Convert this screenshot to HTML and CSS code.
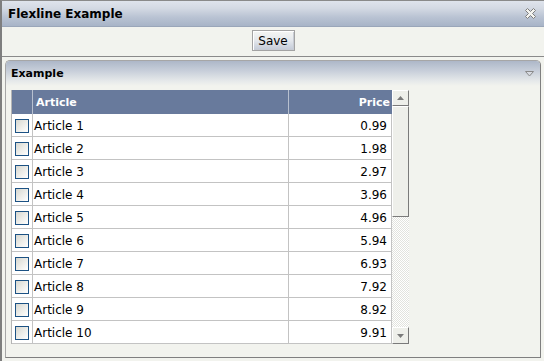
FILE: index.html
```html
<!DOCTYPE html>
<html>
<head>
<meta charset="utf-8">
<link rel="stylesheet" href="styles.css">
</head>
<body>
<div class="window">
  <div class="titlebar">
    <span class="title">Flexline Example</span>
    <svg class="close" width="11" height="11" viewBox="0 0 11 11"><path d="M0.5 2.5 L2.5 0.5 L5.5 3.5 L8.5 0.5 L10.5 2.5 L7.5 5.5 L10.5 8.5 L8.5 10.5 L5.5 7.5 L2.5 10.5 L0.5 8.5 L3.5 5.5 Z" fill="#f4f4f0" stroke="#7d7d7d" stroke-width="1"/></svg>
  </div>
  <div class="toolbar">
    <button class="btn">Save</button>
  </div>
  <div class="content">
    <div class="panel">
      <div class="panel-header">
        <span class="panel-title">Example</span>
        <svg class="collapse" width="9" height="6" viewBox="0 0 9 6"><path d="M0.5 0.5 L8.5 0.5 L4.5 5 Z" fill="#d8dbe2" stroke="#8a8a8a" stroke-width="1"/></svg>
      </div>
      <div class="panel-body">
        <div class="table">
          <div class="grid">
            <div class="row head">
              <div class="cell c-check"></div>
              <div class="cell c-art">Article</div>
              <div class="cell c-price">Price</div>
            </div>
            <div class="row"><div class="cell c-check"><span class="cb"></span></div><div class="cell c-art">Article 1</div><div class="cell c-price">0.99</div></div>
            <div class="row"><div class="cell c-check"><span class="cb"></span></div><div class="cell c-art">Article 2</div><div class="cell c-price">1.98</div></div>
            <div class="row"><div class="cell c-check"><span class="cb"></span></div><div class="cell c-art">Article 3</div><div class="cell c-price">2.97</div></div>
            <div class="row"><div class="cell c-check"><span class="cb"></span></div><div class="cell c-art">Article 4</div><div class="cell c-price">3.96</div></div>
            <div class="row"><div class="cell c-check"><span class="cb"></span></div><div class="cell c-art">Article 5</div><div class="cell c-price">4.96</div></div>
            <div class="row"><div class="cell c-check"><span class="cb"></span></div><div class="cell c-art">Article 6</div><div class="cell c-price">5.94</div></div>
            <div class="row"><div class="cell c-check"><span class="cb"></span></div><div class="cell c-art">Article 7</div><div class="cell c-price">6.93</div></div>
            <div class="row"><div class="cell c-check"><span class="cb"></span></div><div class="cell c-art">Article 8</div><div class="cell c-price">7.92</div></div>
            <div class="row"><div class="cell c-check"><span class="cb"></span></div><div class="cell c-art">Article 9</div><div class="cell c-price">8.92</div></div>
            <div class="row"><div class="cell c-check"><span class="cb"></span></div><div class="cell c-art">Article 10</div><div class="cell c-price">9.91</div></div>
          </div>
          <div class="scrollbar">
            <div class="sb-btn"><svg width="7" height="4" viewBox="0 0 7 4"><path d="M3.5 0 L7 4 L0 4 Z" fill="#7a7a7a"/></svg></div>
            <div class="sb-thumb"></div>
            <div class="sb-track"></div>
            <div class="sb-btn sb-down"><svg width="7" height="4" viewBox="0 0 7 4"><path d="M0 0 L7 0 L3.5 4 Z" fill="#7a7a7a"/></svg></div>
          </div>
        </div>
      </div>
    </div>
  </div>
</div>
</body>
</html>
```

FILE: styles.css
```css
* { box-sizing: border-box; }
html, body { margin: 0; padding: 0; }
body {
  background: #f2f3ee;
  font-family: "DejaVu Sans", "Liberation Sans", sans-serif;
  font-size: 12px;
  color: #000;
}
.window {
  width: 544px;
  height: 361px;
  border-top: 1px solid #8a8a8a;
  border-left: 2px solid #7e7e7e;
  display: flex;
  flex-direction: column;
  overflow: hidden;
}
.titlebar {
  height: 26px;
  flex: none;
  border-bottom: 1px solid #9aa6b9;
  background: linear-gradient(#dfe4ec 0%, #d3d9e3 30%, #b9c3d3 65%, #a8b4c7 100%);
  display: flex;
  align-items: center;
  justify-content: space-between;
  padding: 1px 8px 0 6px;
}
.title { font-weight: bold; font-size: 12px; }
.close { display: block; margin-top: -1px; }
.toolbar {
  height: 30px;
  flex: none;
  border-bottom: 1px solid #8a8a8a;
  display: flex;
  justify-content: center;
  align-items: flex-start;
  padding-top: 3px;
}
.btn {
  width: 43px;
  height: 21px;
  padding: 0;
  margin: 0;
  border: 1px solid #a3a3a3;
  box-shadow: inset 1px 1px 0 #ffffff, inset -1px -1px 0 #c8ccd4;
  background: linear-gradient(#f5f6f3 0%, #e4e7ec 50%, #c3cad7 100%);
  font-family: "DejaVu Sans", "Liberation Sans", sans-serif;
  font-size: 12px;
  color: #000;
  line-height: 18px;
}
.content {
  flex: 1;
  padding: 3px 3px 0 3px;
}
.panel {
  width: 536px;
  height: 298px;
  border: 1px solid;
  border-color: #a6a6a6 #7f7f7f #7f7f7f #a6a6a6;
  border-radius: 5px 5px 0 0;
  background: #f2f3ee;
  display: flex;
  flex-direction: column;
}
.panel-header {
  height: 25px;
  flex: none;
  border-radius: 4px 4px 0 0;
  background: linear-gradient(#adb7c8 0%, #c8cfda 40%, #e6e9ea 80%, #f2f3ee 100%);
  display: flex;
  align-items: center;
  justify-content: space-between;
  padding: 0 6px 1px 5px;
}
.panel-title { font-weight: bold; font-size: 11px; }
.collapse { display: block; margin-top: 1px; }
.panel-body {
  padding: 4px 0 0 5px;
}
.table {
  display: flex;
  align-items: flex-start;
}
.grid {
  border-left: 1px solid #b4b4b4;
  display: flex;
  flex-direction: column;
}
.row {
  display: flex;
  height: 23px;
  background: #ffffff;
  border-bottom: 1px solid #c3c3c3;
}
.row.head {
  height: 24px;
  background: #687a9c;
  border-bottom: none;
  color: #fff;
  font-weight: bold;
  font-size: 11px;
}
.cell {
  border-right: 1px solid #c3c3c3;
  display: flex;
  align-items: center;
  white-space: nowrap;
  padding-top: 1px;
}
.head .cell { border-right-color: #b7c0cf; }
.head .c-price { border-right: none; }
.c-check { width: 21px; justify-content: center; padding-right: 1px; }
.c-art { width: 256px; padding-left: 1px; }
.head .c-art { padding-left: 3px; }
.c-price { width: 103px; justify-content: flex-end; padding-right: 4px; }
.head .c-price { padding-right: 2px; }
.cb {
  width: 14px;
  height: 14px;
  border: 1px solid #1c5284;
  background: linear-gradient(135deg, #d6d7d0 0%, #eeeeea 55%, #ffffff 100%);
}
.scrollbar {
  width: 17px;
  height: 254px;
  display: flex;
  flex-direction: column;
}
.sb-btn {
  height: 16px;
  flex: none;
  background: #eeefea;
  border-top: 1px solid #ffffff;
  border-left: 1px solid #ffffff;
  border-right: 1px solid #7a7a7a;
  border-bottom: 1px solid #7a7a7a;
  display: flex;
  align-items: center;
  justify-content: center;
}
.sb-btn svg { display: block; }
.sb-down { height: 17px; }
.sb-thumb {
  height: 111px;
  flex: none;
  background: #eeefea;
  border-top: 1px solid #ffffff;
  border-left: 1px solid #ffffff;
  border-right: 1px solid #7a7a7a;
  border-bottom: 1px solid #7a7a7a;
}
.sb-track {
  flex: 1;
  background: repeating-conic-gradient(#e2e3de 0 25%, #ffffff 0 50%) 0 0 / 2px 2px;
}
```
